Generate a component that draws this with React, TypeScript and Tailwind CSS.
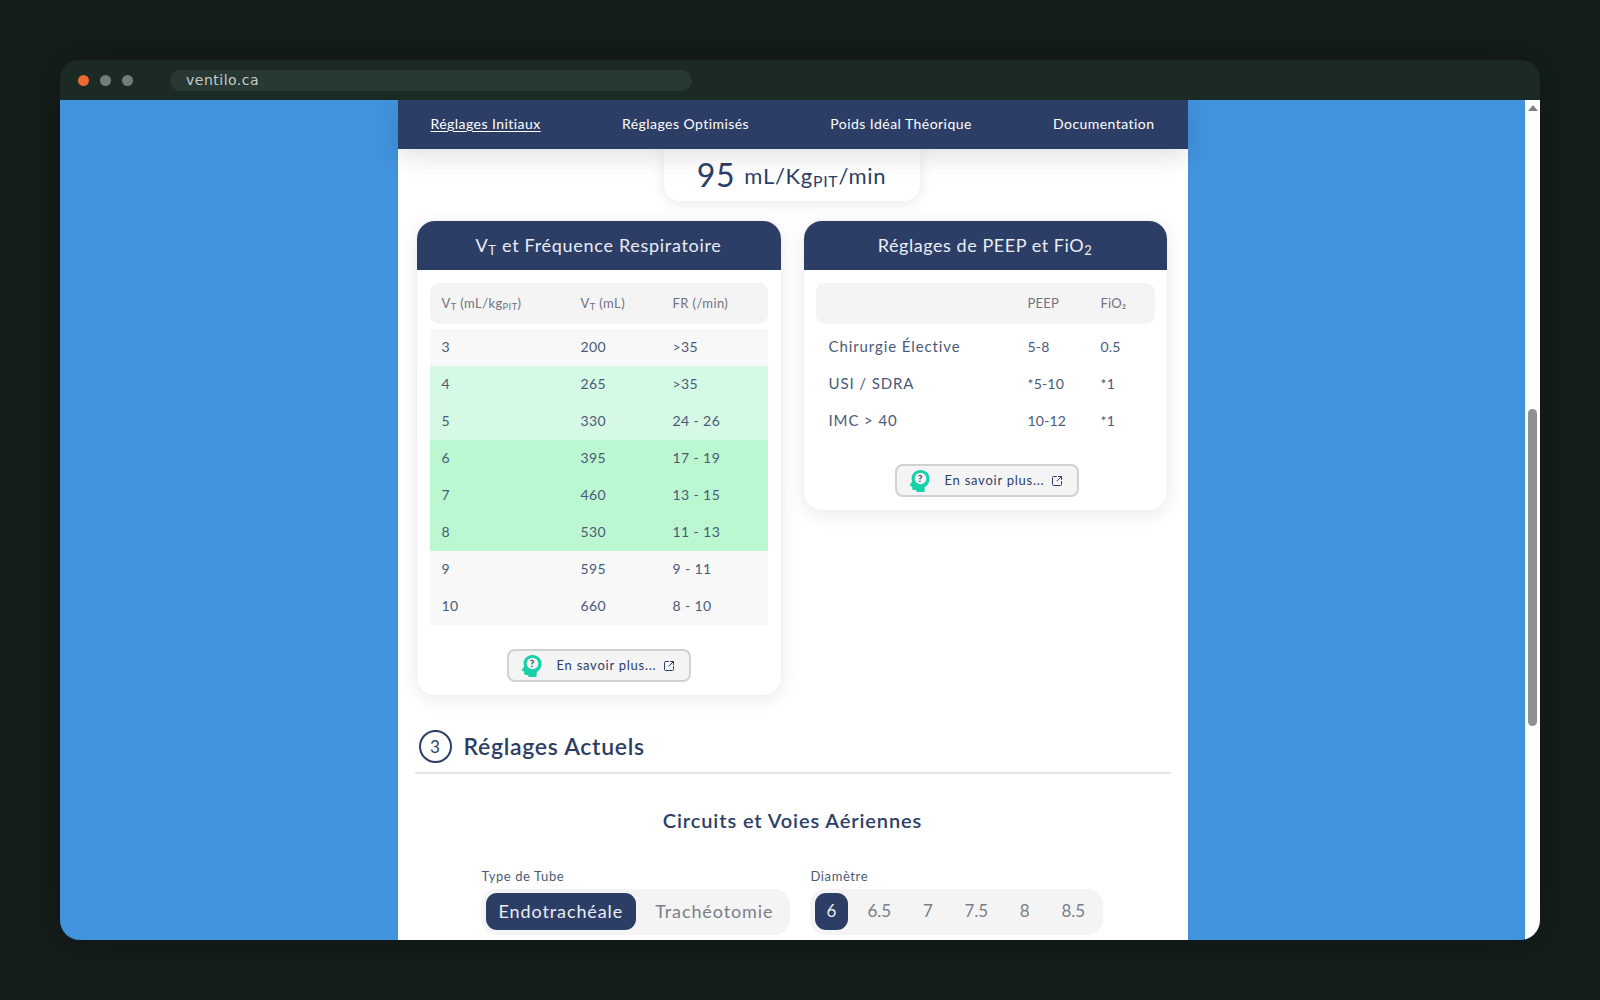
import { SquareArrowOutUpRight } from "lucide-react";

const FONT = "font-['Lato','Noto_Sans',sans-serif]";

const vtRows = [
  { vt: "3", ml: "200", fr: ">35", bg: "bg-[#f8f8f9]" },
  { vt: "4", ml: "265", fr: ">35", bg: "bg-[#d5f9e4]" },
  { vt: "5", ml: "330", fr: "24 - 26", bg: "bg-[#d5f9e4]" },
  { vt: "6", ml: "395", fr: "17 - 19", bg: "bg-[#bbf7d0]" },
  { vt: "7", ml: "460", fr: "13 - 15", bg: "bg-[#bbf7d0]" },
  { vt: "8", ml: "530", fr: "11 - 13", bg: "bg-[#bbf7d0]" },
  { vt: "9", ml: "595", fr: "9 - 11", bg: "bg-[#f8f8f9]" },
  { vt: "10", ml: "660", fr: "8 - 10", bg: "bg-[#f8f8f9]" },
];

const peepRows = [
  { name: "Chirurgie Élective", peep: "5-8", fio: "0.5" },
  { name: "USI / SDRA", peep: "*5-10", fio: "*1" },
  { name: "IMC > 40", peep: "10-12", fio: "*1" },
];

function HeadIcon() {
  return (
    <svg width="22" height="24" viewBox="0 0 22 24" aria-hidden>
      <path
        d="M11.5 1C6.3 1 2.6 4.800 2.600 9.600c0 1.200.2 2.100.6 3L1 15.600c-.4.600 0 1.200.6 1.300l1.400.3.2 2.200c.1 1 .9 1.700 2 1.600l2-.1.300 2.100h8l.2-4.700c2.800-1.500 4.800-4.500 4.800-8.700C20.500 4.800 16.700 1 11.500 1Z"
        fill="#17d1a8"
      />
      <circle cx="11.500" cy="9.500" r="5.800" fill="#f4f4f5" />
      <text x="11.500" y="13" textAnchor="middle" fontSize="10" fontWeight="700" fill="#2d3e66" fontFamily="Lato, sans-serif">
        ?
      </text>
    </svg>
  );
}

function MoreButton({ className = "" }: { className?: string }) {
  return (
    <div className={`flex justify-center ${className}`}>
      <button
        type="button"
        className="flex h-[33px] w-[184px] items-center rounded-lg border-2 border-[#d1d1d4] bg-[#f4f4f5] pl-[12px] text-[13px] tracking-[0.75px] text-[#2d3e66]"
      >
        <HeadIcon />
        <span className="ml-[14px]">En savoir plus...</span>
        <SquareArrowOutUpRight size={12} strokeWidth={2} className="ml-[7px]" />
      </button>
    </div>
  );
}

function Card({
  title,
  titleClass,
  width,
  children,
}: {
  title: React.ReactNode;
  titleClass: string;
  width: string;
  children: React.ReactNode;
}) {
  return (
    <div className={`overflow-hidden rounded-[18px] bg-white shadow-[0_4px_20px_rgba(0,0,0,0.09)] ring-1 ring-[#f2f2f3] ${width}`}>
      <div className={`flex h-[49px] items-center justify-center bg-[#2d3e66] pb-[1px] text-[18px] text-[#e9edf5] ${titleClass}`}>
        {title}
      </div>
      {children}
    </div>
  );
}

function Sub({ children }: { children: React.ReactNode }) {
  return <sub className="text-[0.72em] leading-none">{children}</sub>;
}

function VtCard() {
  return (
    <Card
      width="w-[364px]"
      titleClass="tracking-[0.7px]"
      title={
        <span>
          V<Sub>T</Sub> et Fréquence Respiratoire
        </span>
      }
    >
      <div className="px-[13px] pb-[13px] pt-[13px]">
        <div className="grid h-[41px] grid-cols-[139px_92px_1fr] items-center rounded-[9px] bg-[#f4f4f5] px-[12px] text-[13px] tracking-[0.4px] text-[#6f7280]">
          <span>
            V<Sub>T</Sub> (mL/kg<Sub>PIT</Sub>)
          </span>
          <span>
            V<Sub>T</Sub> (mL)
          </span>
          <span>FR (/min)</span>
        </div>
        <div className="mt-[5px]">
          {vtRows.map((r) => (
            <div
              key={r.vt}
              className={`grid h-[37px] grid-cols-[139px_92px_1fr] items-center px-[12px] pb-[3px] text-[14px] tracking-[0.4px] text-[#4a5a78] ${r.bg}`}
            >
              <span>{r.vt}</span>
              <span>{r.ml}</span>
              <span>{r.fr}</span>
            </div>
          ))}
        </div>
        <div className="mt-[24px]">
          <MoreButton />
        </div>
      </div>
    </Card>
  );
}

function PeepCard() {
  return (
    <Card
      width="w-[363px]"
      titleClass="tracking-[0.55px]"
      title={
        <span>
          Réglages de PEEP et FiO<Sub>2</Sub>
        </span>
      }
    >
      <div className="px-[12px] pb-[13px] pt-[13px]">
        <div className="grid h-[41px] grid-cols-[199px_73px_1fr] items-center rounded-[9px] bg-[#f4f4f5] px-[13px] text-[13px] tracking-[0.2px] text-[#6f7280]">
          <span />
          <span>PEEP</span>
          <span>FiO₂</span>
        </div>
        <div className="mt-[5px]">
          {peepRows.map((r) => (
            <div
              key={r.name}
              className="grid h-[37px] grid-cols-[199px_73px_1fr] items-center px-[13px] pb-[3px] text-[15px] tracking-[0.9px] text-[#4a5a78]"
            >
              <span>{r.name}</span>
              <span className="text-[14px] tracking-[0.2px]">{r.peep}</span>
              <span className="text-[14px] tracking-[0.2px]">{r.fio}</span>
            </div>
          ))}
        </div>
        <div className="mt-[24px]">
          <MoreButton className="pl-[3px]" />
        </div>
      </div>
    </Card>
  );
}

function Segment({
  label,
  items,
  width,
  textClass,
  activeClass,
  itemClass,
}: {
  label: string;
  items: string[];
  width: string;
  textClass: string;
  activeClass: string;
  itemClass: string;
}) {
  return (
    <div className={width}>
      <div className="mb-[3px] pl-[1px] text-[13px] leading-[20px] tracking-[0.6px] text-[#4a5a78]">{label}</div>
      <div className={`flex h-[46px] items-center rounded-[16px] bg-[#f4f4f5] px-[5px] pb-[2px] text-[#7b7e88] ${textClass}`}>
        {items.map((item, i) => (
          <span
            key={item}
            className={
              i === 0
                ? `flex h-[37px] items-center rounded-[11px] bg-[#2d3e66] text-[#e9edf5] ${activeClass}`
                : `text-center ${itemClass}`
            }
          >
            {item}
          </span>
        ))}
      </div>
    </div>
  );
}

export default function App() {
  return (
    <div className={`flex h-[1000px] w-[1600px] items-center justify-center bg-[#141e1b] ${FONT}`}>
      <div className="flex h-[880px] w-[1480px] flex-col overflow-hidden rounded-[20px] shadow-[0_0_40px_rgba(0,0,0,0.3)]">
        {/* browser chrome */}
        <div className="flex h-[40px] shrink-0 items-center bg-[#1c2a26] pl-[18px]">
          <span className="h-[11px] w-[11px] rounded-full bg-[#ea6a30]" />
          <span className="ml-[11px] h-[11px] w-[11px] rounded-full bg-[#6f7f78]" />
          <span className="ml-[11px] h-[11px] w-[11px] rounded-full bg-[#6f7f78]" />
          <div className="ml-[37px] flex h-[21px] w-[522px] items-center rounded-full bg-[#283833] pl-[16px] pt-[1px] font-['DejaVu_Sans',sans-serif] text-[14px] tracking-[0.5px] text-[#c3ccc8]">
            ventilo.ca
          </div>
        </div>

        <div className="flex min-h-0 flex-1">
          <div className="flex min-w-0 flex-1 justify-center overflow-hidden bg-[#4193dd]">
            <div className="w-[790px] shrink-0 bg-white">
              <nav className="relative z-10 flex h-[49px] items-center justify-between bg-[#2d3e66] px-[33px] pb-[2px] text-[14px] tracking-[0.45px] text-white shadow-[0_8px_24px_rgba(0,0,0,0.12)]">
                <span className="underline underline-offset-2">Réglages Initiaux</span>
                <span>Réglages Optimisés</span>
                <span>Poids Idéal Théorique</span>
                <span>Documentation</span>
              </nav>

              <div className="flex justify-center pr-[2px]">
                <div className="flex h-[52px] w-[256px] items-center justify-center gap-[9px] rounded-b-[16px] bg-white tracking-[0.7px] text-[#2d3e66] shadow-[0_2px_14px_rgba(0,0,0,0.1)]">
                  <span className="text-[32px]">95</span>
                  <span className="text-[22px]">
                    mL/Kg<Sub>PIT</Sub>/min
                  </span>
                </div>
              </div>

              <div className="mt-[20px] flex items-start gap-[23px] pl-[19px]">
                <VtCard />
                <PeepCard />
              </div>

              <div className="mx-[17px] mt-[35px] flex h-[44px] items-center gap-[12px] border-b-2 border-[#e5e5e7] pb-[9px] pl-[4px] text-[#2d3e66]">
                <span className="flex h-[33px] w-[33px] items-center justify-center rounded-full border-2 border-[#2d3e66] text-[17px]">
                  3
                </span>
                <span className="text-[23px] font-semibold tracking-[0.7px]">Réglages Actuels</span>
              </div>

              <h2 className="mt-[31px] text-center text-[20px] font-semibold tracking-[0.9px] text-[#2d3e66]">
                Circuits et Voies Aériennes
              </h2>

              <div className="ml-[83px] mt-[31px] flex gap-[20px]">
                <Segment
                  label="Type de Tube"
                  items={["Endotrachéale", "Trachéotomie"]}
                  width="w-[309px]"
                  textClass="text-[18px] tracking-[0.9px]"
                  activeClass="px-[13px]"
                  itemClass="flex-1 pl-[8px]"
                />
                <Segment
                  label="Diamètre"
                  items={["6", "6.5", "7", "7.5", "8", "8.5"]}
                  width="w-[293px]"
                  textClass="text-[17px]"
                  activeClass="w-[34px] justify-center mr-[7px]"
                  itemClass="w-[49px]"
                />
              </div>
            </div>
          </div>

          {/* scrollbar */}
          <div className="relative w-[15px] shrink-0 bg-white">
            <div className="mx-auto mt-[5px] h-0 w-0 border-x-[5px] border-b-[6px] border-x-transparent border-b-[#7f7f7f]" />
            <div className="absolute left-[3px] top-[309px] h-[317px] w-[9px] rounded-full bg-[#909090]" />
          </div>
        </div>
      </div>
    </div>
  );
}
